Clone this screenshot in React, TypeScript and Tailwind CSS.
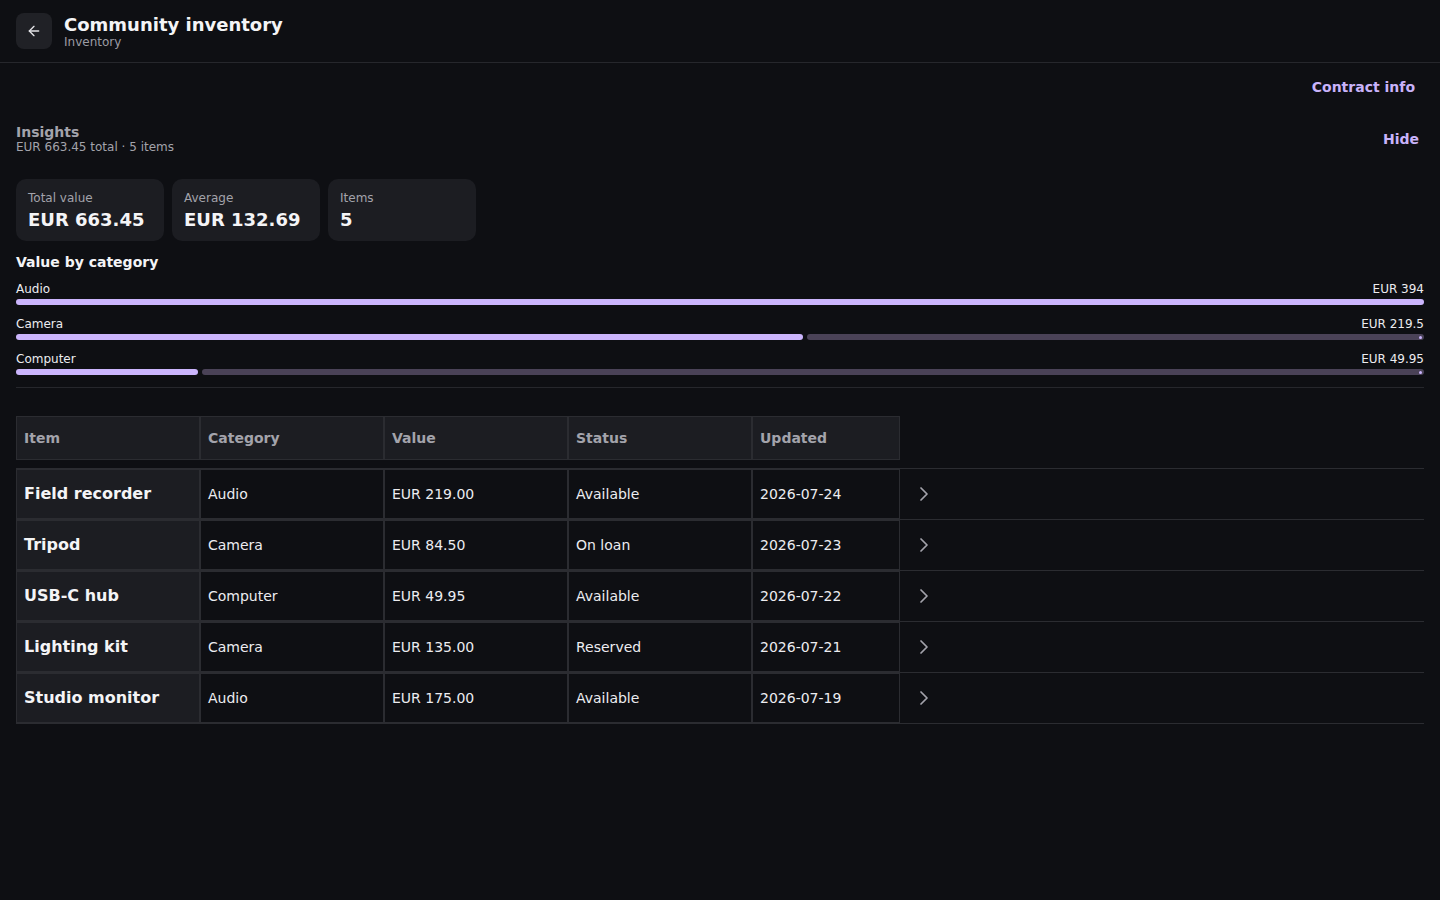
import React from 'react';
import { ArrowLeft, ChevronRight } from 'lucide-react';

const items = [
  { name: 'Field recorder', category: 'Audio', value: 'EUR 219.00', status: 'Available', updated: '2026-07-24' },
  { name: 'Tripod', category: 'Camera', value: 'EUR 84.50', status: 'On loan', updated: '2026-07-23' },
  { name: 'USB-C hub', category: 'Computer', value: 'EUR 49.95', status: 'Available', updated: '2026-07-22' },
  { name: 'Lighting kit', category: 'Camera', value: 'EUR 135.00', status: 'Reserved', updated: '2026-07-21' },
  { name: 'Studio monitor', category: 'Audio', value: 'EUR 175.00', status: 'Available', updated: '2026-07-19' },
];

const categories = [
  { name: 'Audio', label: 'EUR 394', value: 394 },
  { name: 'Camera', label: 'EUR 219.5', value: 219.5 },
  { name: 'Computer', label: 'EUR 49.95', value: 49.95 },
];

const stats = [
  { label: 'Total value', value: 'EUR 663.45' },
  { label: 'Average', value: 'EUR 132.69' },
  { label: 'Items', value: '5' },
];

function CategoryBar({ name, label, value }: { name: string; label: string; value: number }) {
  const pct = (value / 394) * 100;
  const full = pct >= 100;
  return (
    <div className="flex flex-col">
      <div className="flex justify-between text-xs leading-4 text-[#ececf0]">
        <span>{name}</span>
        <span>{label}</span>
      </div>
      <div className="mt-[2px] mb-[1px] flex h-[6px] gap-1">
        <div className="h-full rounded-full bg-[#cbb5fc]" style={{ width: full ? '100%' : `calc(${pct}% + 3px)` }} />
        {!full && (
          <div className="relative h-full flex-1 rounded-full bg-[#4a4257]">
            <span className="absolute right-[2px] top-[1.5px] h-[3px] w-[3px] rounded-full bg-[#cbb5fc]" />
          </div>
        )}
      </div>
    </div>
  );
}

export default function App() {
  const cols = ['w-[184px]', 'w-[184px]', 'w-[184px]', 'w-[184px]', 'w-[148px]'];
  return (
    <div className="min-h-screen bg-[#0e0f13] text-white" style={{ fontFamily: '"DejaVu Sans", "Noto Sans", sans-serif' }}>
      <header className="flex items-center gap-3 border-b border-[#26272c] px-4 py-[13px]">
        <button className="flex h-9 w-9 items-center justify-center rounded-lg bg-[#202126] text-[#e4e4e8]">
          <ArrowLeft className="h-4 w-4" strokeWidth={2} />
        </button>
        <div className="flex flex-col">
          <h1 className="text-lg font-bold leading-[23px] text-[#f4f4f6]">Community inventory</h1>
          <span className="text-xs leading-[13px] text-[#9c9ca4]">Inventory</span>
        </div>
      </header>

      <main className="flex flex-col px-4 pt-[14px]">
        <div className="flex justify-end">
          <button className="pr-[9px] text-sm font-bold leading-5 text-[#c9b3fa]">Contract info</button>
        </div>

        <div className="mt-[27px] flex items-center justify-between">
          <div>
            <div className="text-sm font-bold leading-[16px] text-[#a3a3ab]">Insights</div>
            <div className="text-xs leading-[14px] text-[#a3a3ab]">EUR 663.45 total · 5 items</div>
          </div>
          <button className="pr-[5px] text-sm font-bold leading-5 text-[#c9b3fa]">Hide</button>
        </div>

        <div className="mt-[25px] flex gap-2">
          {stats.map((s) => (
            <div key={s.label} className="h-[62px] w-[148px] rounded-[10px] bg-[#1c1d22] px-3 pt-[11px]">
              <div className="text-xs leading-4 text-[#a3a3ab]">{s.label}</div>
              <div className="mt-[2px] text-lg font-bold leading-6 text-[#f4f4f6]">{s.value}</div>
            </div>
          ))}
        </div>

        <div className="mt-[11px] text-sm font-bold leading-5 text-[#f4f4f6]">Value by category</div>
        <div className="mt-[9px] flex flex-col gap-[10px]">
          {categories.map((c) => (
            <CategoryBar key={c.name} {...c} />
          ))}
        </div>
        <div className="mt-[11px] border-t border-[#26272c]" />

        <div className="mt-[28px] flex">
          {['Item', 'Category', 'Value', 'Status', 'Updated'].map((h, i) => (
            <div key={h} className={`${cols[i]} flex h-[44px] items-center border border-[#2b2c31] bg-[#1c1d22] pl-[7px] text-sm font-bold text-[#a3a3ab]`}>
              {h}
            </div>
          ))}
        </div>

        <div className="mt-2 border-t border-[#2b2c31]">
          {items.map((it) => (
            <div key={it.name} className="flex border-b border-[#2b2c31]">
              <div className={`${cols[0]} flex h-[50px] items-center border border-[#2b2c31] bg-[#1c1d22] pl-[7px] text-base font-bold text-[#f4f4f6]`}>
                {it.name}
              </div>
              {[it.category, it.value, it.status, it.updated].map((v, i) => (
                <div key={i} className={`${cols[i + 1]} flex h-[50px] items-center border border-[#2b2c31] pl-[7px] text-sm text-[#ececf0]`}>
                  {v}
                </div>
              ))}
              <div className="flex flex-1 items-center pl-3 text-[#a3a3ab]">
                <ChevronRight className="h-6 w-6" strokeWidth={1.75} />
              </div>
            </div>
          ))}
        </div>
      </main>
    </div>
  );
}
